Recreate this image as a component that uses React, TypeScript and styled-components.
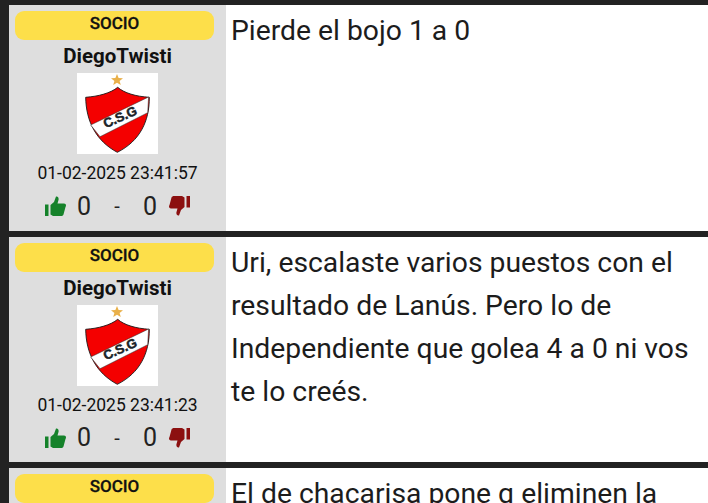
import React from "react";
import styled, { createGlobalStyle } from "styled-components";

const GlobalStyle = createGlobalStyle`
  html, body {
    margin: 0;
    height: 503px;
    overflow: hidden;
    background: #222222;
  }
  body {
    font-family: Roboto, "Liberation Sans", sans-serif;
    color: #111111;
  }
`;

const Feed = styled.div`
  display: flex;
  flex-direction: column;
  gap: 6px;
  padding: 5px 0 0 9px;
`;

const Post = styled.div`
  display: grid;
  grid-template-columns: 217px 1fr;
  background: #ffffff;
`;

const Side = styled.div`
  display: flex;
  flex-direction: column;
  align-items: center;
  height: 225.5px;
  padding-top: 6px;
  box-sizing: border-box;
  background: #dedede;
`;

const Badge = styled.div`
  align-self: flex-start;
  margin-left: 6px;
  width: 199px;
  height: 29px;
  flex: none;
  display: flex;
  align-items: center;
  justify-content: center;
  padding-bottom: 5px;
  box-sizing: border-box;
  border-radius: 9px;
  background: #fddf4a;
  font-size: 17px;
  font-weight: 500;
  -webkit-text-stroke: 0.3px #111111;
`;

const UserName = styled.div`
  margin-top: 4px;
  height: 24px;
  line-height: 24px;
  font-size: 20.5px;
  font-weight: 700;
  white-space: nowrap;
`;

const Crest = styled.svg`
  display: block;
  width: 81px;
  height: 81px;
  flex: none;
  margin-top: 5px;
  background: #ffffff;
`;

const PostDate = styled.div`
  margin-top: 9px;
  height: 20px;
  line-height: 20px;
  font-size: 17.5px;
  white-space: nowrap;
`;

const Votes = styled.div`
  display: flex;
  align-items: center;
  margin-top: 11px;
  height: 24px;
  font-size: 25px;
  color: #222222;
`;

const VoteCount = styled.span`
  width: 24px;
  text-align: center;
`;

const Dash = styled.span`
  width: 42px;
  text-align: center;
  font-size: 20px;
`;

const Thumb = styled.svg<{ $down?: boolean }>`
  display: block;
  width: 21px;
  height: 20px;
  flex: none;
  margin: ${(p) => (p.$down ? "0 0 0 7px" : "0 6px 0 0")};
  fill: ${(p) => (p.$down ? "#8c1010" : "#15822a")};
  transform: ${(p) => (p.$down ? "rotate(180deg)" : "none")};
`;

const Message = styled.div`
  padding: 4px 10px 0 5px;
  font-size: 28.3px;
  line-height: 43px;
  color: #1c1c1c;
`;

const ClubCrest = () => (
  <Crest viewBox="0 0 81 81">
    <polygon
      fill="#e9b04a"
      points="40,1 41.6,5 46,5.2 42.6,8 43.8,12 40,9.8 36.2,12 37.4,8 34,5.2 38.4,5"
    />
    <path
      d="M40.7 14.3 C47 20 59 23.5 72.3 24.3 C72.5 48 63 68 40.3 79.3 C19 68 9 48 8.7 24.3 C21 23.5 34 20 40.7 14.3 Z"
      fill="#f40000"
      stroke="#1a1a1a"
      strokeWidth="0.9"
    />
    <polygon fill="#ffffff" stroke="#222222" strokeWidth="0.5" points="13.7,52 71.6,24 70.7,39.7 23,63.7" />
    <text
      x="43"
      y="48.5"
      textAnchor="middle"
      transform="rotate(-24 43 44)"
      fontFamily="'Liberation Sans', sans-serif"
      fontSize="13"
      fontWeight="700"
      fill="#1a2328"
      stroke="#1a2328"
      strokeWidth="0.5"
    >
      C.S.G
    </text>
  </Crest>
);

const ThumbShape = () => (
  <>
    <rect x="0" y="8.5" width="3.5" height="11.5" />
    <path d="M5.5 9 L9 6 L11 .5 C13 0 14 2 13.5 4 L12.5 7.5 H19 C21 7.5 21.5 9.5 20.5 11 L18.5 18.5 C18 19.5 17 20 16 20 H8 L5.5 18.5 Z" />
  </>
);

const Thumbs = () => (
  <Votes>
    <Thumb viewBox="0 0 21 20">
      <ThumbShape />
    </Thumb>
    <VoteCount>0</VoteCount>
    <Dash>-</Dash>
    <VoteCount>0</VoteCount>
    <Thumb $down viewBox="0 0 21 20">
      <ThumbShape />
    </Thumb>
  </Votes>
);

const posts = [
  { id: 1, date: "01-02-2025 23:41:57", text: "Pierde el bojo 1 a 0" },
  {
    id: 2,
    date: "01-02-2025 23:41:23",
    text: "Uri, escalaste varios puestos con el resultado de Lanús. Pero lo de Independiente que golea 4 a 0 ni vos te lo creés.",
  },
  // only the top of this one is on screen
  { id: 3, date: "", text: "El de chacarisa pone q eliminen la" },
];

export default function App() {
  return (
    <>
      <GlobalStyle />
      <Feed>
        {posts.map((post) => (
          <Post key={post.id}>
            <Side>
              <Badge>SOCIO</Badge>
              {post.date && (
                <>
                  <UserName>DiegoTwisti</UserName>
                  <ClubCrest />
                  <PostDate>{post.date}</PostDate>
                  <Thumbs />
                </>
              )}
            </Side>
            <Message>{post.text}</Message>
          </Post>
        ))}
      </Feed>
    </>
  );
}
